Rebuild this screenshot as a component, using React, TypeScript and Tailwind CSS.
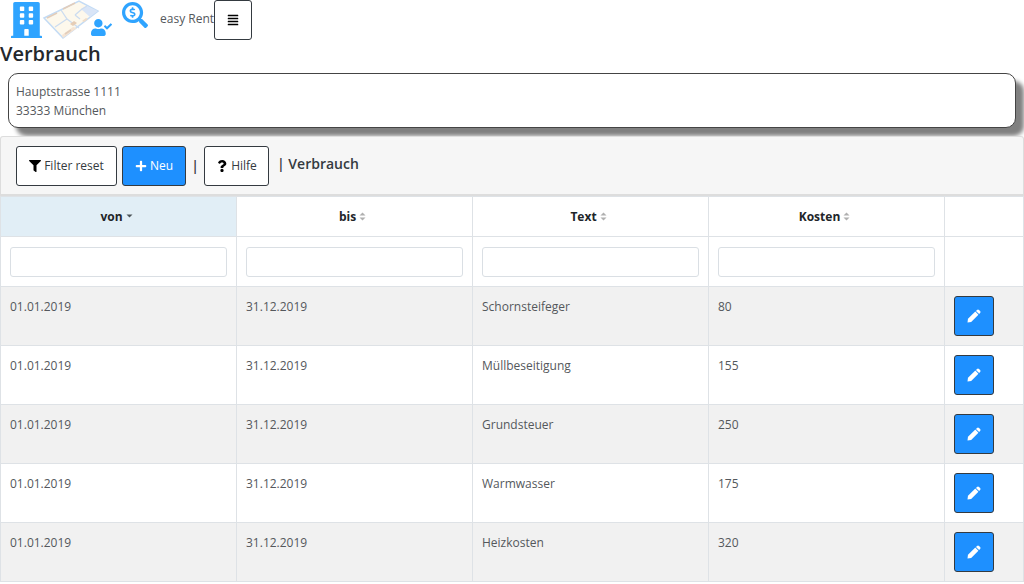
import { FaAlignJustify, FaBuilding, FaFilter, FaPlus, FaQuestion, FaSearchDollar, FaUserCheck } from "react-icons/fa";

const columns = ["von", "bis", "Text", "Kosten"];

const rows = [
  ["01.01.2019", "31.12.2019", "Schornsteifeger", "80"],
  ["01.01.2019", "31.12.2019", "Müllbeseitigung", "155"],
  ["01.01.2019", "31.12.2019", "Grundsteuer", "250"],
  ["01.01.2019", "31.12.2019", "Warmwasser", "175"],
  ["01.01.2019", "31.12.2019", "Heizkosten", "320"],
];

function FloorPlan() {
  return (
    <svg viewBox="0 0 60 42" className="h-[42px] w-[60px]" aria-hidden="true">
      <path d="M2 18 37 1 56 11 21 38Z" fill="#fdf8ec" stroke="#c3dbf5" strokeWidth="1.5" />
      <path d="M39 9 45 6 56 11 48 17Z" fill="#d9e5f7" />
      <path d="M20 35 31 27 35 28 21 38Z" fill="#f5e4d3" />
      <path d="M19 10 25 19 37 28M25 19 13 27M33 15 40 9 45 6M33 15 38 19" fill="none" stroke="#ccdcf0" strokeWidth="1.3" />
      <path d="m5 18 10-5M21 9l12-6M23 34l6-4" fill="none" stroke="#e2cdbb" strokeWidth="1.6" />
      <path d="m28 24 4-3 3 2-4 3Z" fill="#e6cdb5" />
      <path d="m40 21 4-3 2 1-4 3Z" fill="#efdcc8" />
    </svg>
  );
}

function PencilIcon() {
  return (
    <svg viewBox="0 0 14 14" className="size-[14px]" fill="currentColor" aria-hidden="true">
      <path d="M0.5 13.5 1 9.8 8.3 2.6 11.4 5.7 4.2 13Z" />
      <path d="M9 1.9 10 0.9Q11 0 12 0.9L13.1 2Q14 3 13.1 4L12.1 5Z" />
    </svg>
  );
}

function SortIcon({ active }: { active: boolean }) {
  return (
    <svg viewBox="0 0 7 9" className="h-[9px] w-[7px]" aria-hidden="true">
      {!active && <path d="M0.5 3.5 3.5 0.5 6.5 3.5Z" fill="#b0b0b0" />}
      {active ? <path d="M0.5 2.5h6L3.5 5.5Z" fill="#4b5257" /> : <path d="M0.5 5.5h6L3.5 8.5Z" fill="#b0b0b0" />}
    </svg>
  );
}

const button = "flex h-10 items-center justify-center gap-[3px] rounded-[3px] border border-[#343a40]";
const cell = "border border-[#dee2e6]";

export default function App() {
  return (
    <div className="bg-white font-['Open_Sans','Noto_Sans',sans-serif] text-[12px] leading-[19px] text-[#54585c]">
      <header className="flex h-10 items-start">
        <div className="flex items-start pl-[11px] text-[#2fa4ff]" role="img" aria-label="easy Rent Logo">
          <FaBuilding className="mt-0.5 h-9 w-[31px]" preserveAspectRatio="none" />
          <div className="relative">
            <FloorPlan />
            <FaUserCheck className="absolute top-[19px] left-[49px] h-[17px] w-[21px]" />
          </div>
          <FaSearchDollar className="mt-0.5 ml-5 size-[26px]" />
        </div>
        <span className="ml-3 pt-[9px]">easy Rent</span>
        <button type="button" aria-label="Menü" className={`${button} w-[38px] bg-white text-black`}>
          <FaAlignJustify className="size-3" />
        </button>
      </header>
      <h1 className="text-[20px] leading-7 font-semibold text-[#24282c]">Verbrauch</h1>
      <address className="mx-2 mt-[5px] rounded-[10px] border border-[#444] bg-white px-[7px] pt-2 pb-[7px] not-italic shadow-[8px_8px_4px_#808080]">
        Hauptstrasse 1111
        <br />
        33333 München
      </address>
      <div className="relative mt-2 flex h-[60px] items-center gap-[5px] rounded-t-[3px] border border-b-2 border-[#dddddd] bg-[#f6f6f6] px-[15px]">
        <button type="button" className={`${button} w-[101px] bg-white text-[#343a40]`}>
          <FaFilter className="size-3 text-black" />
          Filter reset
        </button>
        <button type="button" className={`${button} w-16 bg-[#1e90ff] text-white`}>
          <FaPlus className="size-3" />
          Neu
        </button>
        <span className="flex w-2 justify-end text-[14px] font-semibold text-[#343a40]">|</span>
        <button type="button" className={`${button} w-[65px] bg-white text-[#343a40]`}>
          <FaQuestion className="size-3 text-black" />
          Hilfe
        </button>
        <h2 className="ml-[3px] pb-1 text-[14px] font-semibold text-[#343a40]">| Verbrauch</h2>
      </div>
      <table className="w-full table-fixed border-collapse">
        <colgroup>
          <col />
          <col />
          <col />
          <col />
          <col className="w-[79px]" />
        </colgroup>
        <thead>
          <tr className="h-10">
            {columns.map((name, i) => (
              <th
                key={name}
                aria-sort={i === 0 ? "ascending" : "none"}
                className={`${cell} pr-1 font-bold text-[#212529] ${i === 0 ? "bg-[#e1eef6]" : ""}`}
              >
                <span className="inline-flex items-center gap-[3px]">
                  {name}
                  <SortIcon active={i === 0} />
                </span>
              </th>
            ))}
            <th className={cell} />
          </tr>
          <tr className="h-[50px]">
            {columns.map((name) => (
              <th key={name} className={`${cell} px-[9px]`}>
                <input
                  type="text"
                  aria-label={`Filter ${name}`}
                  className="block h-[30px] w-full rounded-[3px] border border-[#dadfe4] bg-white px-2 font-normal"
                />
              </th>
            ))}
            <th className={cell} />
          </tr>
        </thead>
        <tbody>
          {rows.map((row) => (
            <tr key={row[2]} className="h-[59px] odd:bg-[#f1f1f1]">
              {row.map((value, i) => (
                <td key={i} className={`${cell} px-[9px] pt-[10px] align-top`}>
                  {value}
                </td>
              ))}
              <td className={`${cell} px-[9px]`}>
                <button type="button" aria-label={`${row[2]} bearbeiten`} className={`${button} w-10 bg-[#1e90ff] text-white`}>
                  <PencilIcon />
                </button>
              </td>
            </tr>
          ))}
        </tbody>
      </table>
    </div>
  );
}
